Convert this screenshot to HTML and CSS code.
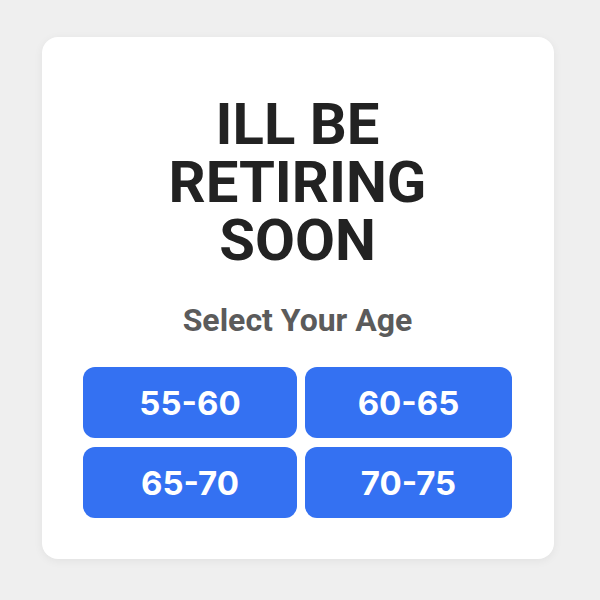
FILE: index.html
```html
<!DOCTYPE html>
<html lang="en">
    <head>
        <meta charset="UTF-8">
        <title>Retirement Age</title>
        <link rel="stylesheet" href="styles.css">
    </head>
    <body>
        <div id="card">
            <h1 id="title">ILL BE<br>RETIRING<br>SOON</h1>
            <h2 id="sub-title">Select Your Age</h2>
            <div id="age-list">
                <button class="age-btn">55-60</button>
                <button class="age-btn">60-65</button>
                <button class="age-btn">65-70</button>
                <button class="age-btn">70-75</button>
            </div>
        </div>
    </body>
</html>
```
FILE: styles.css
```css
* {
    margin: 0;
    padding: 0;
    box-sizing: border-box;
}

body {
    padding: 37px 46px 41px 42px;
    font-family: Roboto, 'Liberation Sans', sans-serif;
    background-color: #efefef;
}

#card {
    width: 512px;
    height: 522px;
    padding: 58px 42px 40px 41px;
    border-radius: 16px;
    background-color: white;
    box-shadow: 0 2px 10px rgba(0, 0, 0, 0.06);
    text-align: center;
}

#title {
    font-size: 58px;
    font-weight: 700;
    line-height: 1;
    color: #222222;
}

#sub-title {
    margin-top: 35px;
    font-size: 32px;
    font-weight: 700;
    line-height: 1;
    color: #5b5b5b;
}

#age-list {
    display: grid;
    grid-template-columns: 214px 1fr;
    gap: 9px 8px;
    margin-top: 31px;
}

.age-btn {
    height: 71px;
    border: none;
    border-radius: 12px;
    font-family: Inter, 'Liberation Sans', sans-serif;
    font-size: 33px;
    font-weight: 700;
    color: white;
    background-color: #3471f2;
}
```
